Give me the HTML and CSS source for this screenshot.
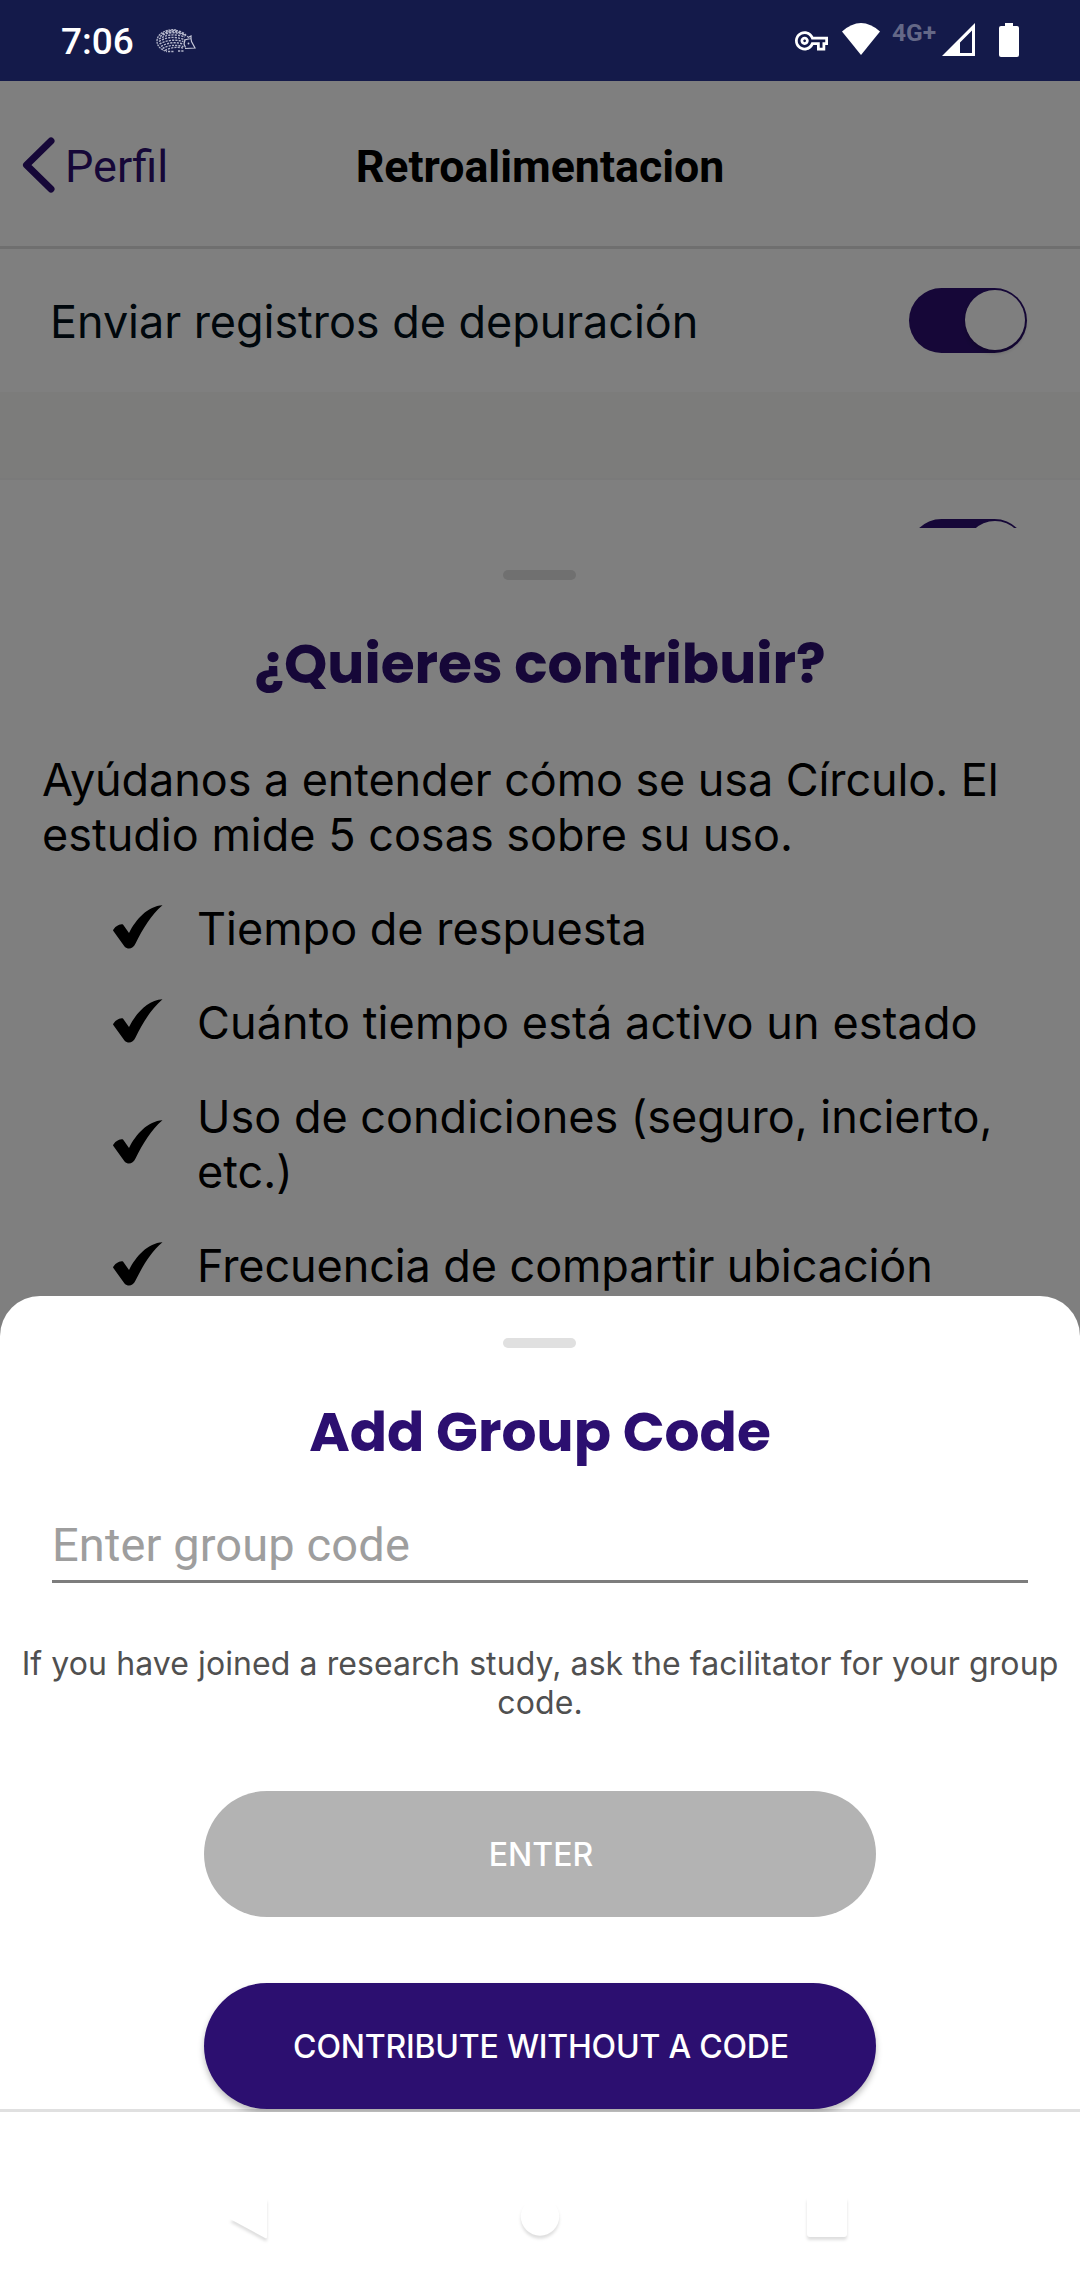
FILE: index.html
```html
<!DOCTYPE html>
<html lang="es">
<head>
<meta charset="utf-8">
<title>Retroalimentacion</title>
<link rel="stylesheet" href="styles.css">
</head>
<body>
<div class="phone">
  <div class="status">
    <span class="clock">7:06</span>
    <svg class="hedgehog" width="40" height="24" viewBox="0 0 40 24" fill="none">
      <path d="M20 1C10-.5 1 5 1 12c0 5 4 9 10 10.500" stroke="#b4b7cb" stroke-width="1.300" stroke-dasharray="2 .8"/>
      <path d="M10 2.500Q22-1 30 6M6 5Q20-1 32 8M4 7.500q11-7 26-1M3 10q11-7 26-2M3 12.500q11-7 25-2M3.500 15q11-6 24-2.500M5 17.500q10-6 22-2.500M6.500 19.500q9-5 21-2M9 21.500q8-4.500 18-2.500M12 22.500h6M22 22h6" stroke="#b4b7cb" stroke-width="1.400" stroke-dasharray="2.200 1.100"/>
      <path d="M28 11l7-1.500 .5 3 3.500 6.500-10 .5M29 11l-1 4 1.500 3.500M32 8.500l3-1.500v3" stroke="#c6c8d8" stroke-width="1.200"/>
      <circle cx="32.500" cy="14.500" r=".9" fill="#c6c8d8"/>
    </svg>
    <div class="tray">
      <svg class="key" width="33" height="19.500" viewBox="0 5 24 14"><path fill="#fff" d="M22 19h-6v-4h-2.680c-1.140 2.420-3.600 4-6.320 4-3.860 0-7-3.140-7-7s3.140-7 7-7c2.720 0 5.170 1.580 6.320 4H24v6h-2v4zm-4-2h2v-4h2v-2H11.940l-.23-.67C11.010 8.340 9.110 7 7 7c-2.760 0-5 2.240-5 5s2.240 5 5 5c2.110 0 4.010-1.340 4.710-3.330l.23-.67H18v4zM7 15c-1.650 0-3-1.350-3-3s1.350-3 3-3 3 1.350 3 3-1.350 3-3 3zm0-4c-.55 0-1 .45-1 1s.45 1 1 1 1-.45 1-1-.45-1-1-1z"/></svg>
      <svg class="wifi" width="40" height="34" viewBox="0 0 40 34"><path d="M1 9.500Q20-7.500 39 9.500L20 33z" fill="#fff"/></svg>
      <span class="net">4G+</span>
      <svg class="signal" width="33" height="33" viewBox="0 0 33 33"><path d="M33 0V33H0zM30 7.500L18 19.500V30h12z" fill="#fff" fill-rule="evenodd"/></svg>
      <svg class="battery" width="20" height="34" viewBox="0 0 20 34"><path d="M6 0h8v3h4a2 2 0 0 1 2 2v27a2 2 0 0 1-2 2H2a2 2 0 0 1-2-2V5a2 2 0 0 1 2-2h4z" fill="#fff"/></svg>
    </div>
  </div>

  <main class="screen">
    <header class="header">
      <a class="back">
        <svg width="34" height="58" viewBox="0 0 34 58"><path d="M30 5L5.500 29 30 53" fill="none" stroke="#2c0f70" stroke-width="7" stroke-linecap="round" stroke-linejoin="round"/></svg>
        <span>Perfil</span>
      </a>
      <h1 class="header-title">Retroalimentacion</h1>
    </header>
    <div class="row">
      <span class="row-label">Enviar registros de depuración</span>
      <span class="switch"><span class="knob"></span></span>
    </div>
    <div class="spacer"></div>
    <div class="row row-end"><span class="switch"><span class="knob"></span></span></div>

    <section class="sheet sheet-contribute">
      <div class="handle"></div>
      <h2 class="title">¿Quieres contribuir?</h2>
      <p class="intro"><span class="snug">Ayúdanos a entender cómo se usa Círculo. El</span><br>estudio mide 5 cosas sobre su uso.</p>
      <ul class="list">
        <li><svg class="check" viewBox="0 0 50 44"><use href="#check"/></svg><span>Tiempo de respuesta</span></li>
        <li><svg class="check" viewBox="0 0 50 44"><use href="#check"/></svg><span class="loose">Cuánto tiempo está activo un estado</span></li>
        <li><svg class="check" viewBox="0 0 50 44"><use href="#check"/></svg><span>Uso de condiciones (seguro, incierto,<br>etc.)</span></li>
        <li><svg class="check" viewBox="0 0 50 44"><use href="#check"/></svg><span class="snug">Frecuencia de compartir ubicación</span></li>
      </ul>
    </section>
    <div class="backdrop"></div>
  </main>

  <section class="sheet sheet-code">
    <div class="handle"></div>
    <h2 class="title">Add Group Code</h2>
    <div class="field">Enter group code</div>
    <p class="help">If you have joined a research study, ask the facilitator for your group<br>code.</p>
    <button class="btn btn-disabled">ENTER</button>
    <button class="btn btn-primary">CONTRIBUTE WITHOUT A CODE</button>
  </section>

  <nav class="navbar">
    <svg width="42" height="52" viewBox="0 0 42 52"><path d="M2 23L37 3q2-1 2 1V41q0 2-2 1z" fill="#fff"/></svg>
    <svg width="46" height="52" viewBox="0 0 46 52"><circle cx="26" cy="20.500" r="19.200" fill="#fff"/></svg>
    <svg width="46" height="52" viewBox="0 0 46 52"><rect x="3" y="1" width="40" height="40" rx="3" fill="#fff"/></svg>
  </nav>
</div>
<svg width="0" height="0" class="defs"><defs>
  <path id="check" d="M0 25.500C1.500 22 6.500 18.500 10 19.500L16 28C23 14 35 1 49.500 .2C38 10 30 23.500 22.500 38.500C20 44 15 45 11.500 41.500z"/>
</defs></svg>
</body>
</html>
```
FILE: styles.css
```css
* { box-sizing: border-box; margin: 0; padding: 0; }
body { background: #fff; font-family: Inter, "Liberation Sans", sans-serif; color: #000; }
svg { display: block; flex: none; }
.defs { position: absolute; }
.phone { position: relative; width: 1080px; height: 2280px; overflow: hidden; display: flex; flex-direction: column; }

.status { height: 81px; background: #141a4a; display: flex; align-items: flex-start; padding-left: 61px; }
.clock { font: 500 37px/44px Roboto, sans-serif; color: #fff; margin-top: 20px; width: 95px; }
.hedgehog { margin-top: 29px; }
.tray { margin-left: auto; display: flex; padding-right: 61px; }
.key { margin-top: 31px; }
.wifi { margin: 22px 0 0 13px; }
.net { font: 700 24.5px/28px Roboto, sans-serif; color: #646887; margin: 19px 0 0 11px; width: 50px; }
.signal { margin-top: 23px; }
.battery { margin: 23px 0 0 24px; }

.screen { position: relative; flex: 1; background: #fff; }
.header { height: 168px; border-bottom: 3px solid #dedede; display: grid; grid-template-columns: 1fr auto 1fr; align-items: center; padding: 0 21px; }
.back { display: flex; align-items: center; color: #2c0f70; font: 400 45px/54px Roboto, sans-serif; gap: 10px; padding-top: 3px; }
.back span { padding-top: 4px; }
.header-title { font: 700 44.700px/54px Roboto, sans-serif; padding-top: 6px; }

.row { height: 143px; display: flex; align-items: center; justify-content: space-between; padding: 0 53px 0 50px; }
.row-end { justify-content: flex-end; }
.row-label { font-size: 45px; line-height: 55px; letter-spacing: -.050px; color: #000f18; padding-top: 1px; }
.spacer { height: 88px; background: #f9f9f6; border-bottom: 2px solid #f5f5f5; }
.switch { width: 118px; height: 65px; border-radius: 33px; background: #2c0f70; padding: 2px; display: flex; justify-content: flex-end; }
.knob { width: 60px; height: 60px; border-radius: 50%; background: #fff; box-shadow: 0 3px 4px rgba(0, 0, 0, .2); }

.sheet { position: absolute; left: 0; right: 0; bottom: 0; background: #fff; display: flex; flex-direction: column; align-items: center; }
.sheet-contribute { top: 447px; padding-top: 42px; }
.handle { flex: none; width: 73px; height: 10px; margin-right: 1px; border-radius: 5px; background: #e0e0e0; }
.title { font-family: Poppins, Inter, sans-serif; font-weight: 700; font-size: 55px; line-height: 80px; margin-top: 44px; color: #2c0f70; }
.intro { align-self: stretch; font-size: 45px; line-height: 55px; padding-left: 42px; margin-top: 48px; }
.list { list-style: none; align-self: stretch; padding-left: 113px; margin-top: 39px; display: flex; flex-direction: column; gap: 39px; font-size: 45px; line-height: 55px; }
.list li { display: flex; align-items: center; gap: 34px; }
.check { width: 50px; height: 44px; margin-bottom: 4px; }
.snug { letter-spacing: -.090px; }
.loose { letter-spacing: .080px; }
.backdrop { position: absolute; inset: 0; background: rgba(0, 0, 0, .5); }

.sheet-code { top: 1296px; bottom: 168px; border-bottom: 3px solid #e0e0e0; padding-top: 42px; border-top-left-radius: 40px; border-top-right-radius: 40px; }
.field { width: 976px; height: 66px; margin-top: 45px; border-bottom: 3px solid #7d7d7d; font: 400 47px/56px Roboto, sans-serif; letter-spacing: .120px; color: #9e9e9e; }
.help { margin-top: 61px; font-size: 32px; line-height: 39px; letter-spacing: .087px; text-align: center; color: #505050; }
.btn { flex: none; width: 672px; height: 126px; border: 0; border-radius: 63px; color: #fff; font: 500 32px/40px Inter, sans-serif; padding: 1px 0 0 2px; }
.btn-disabled { margin-top: 69px; background: #b3b3b3; }
.btn-primary { margin-top: 66px; background: #2c0f70; letter-spacing: -.200px; box-shadow: 0 4px 6px rgba(0, 0, 0, .26); }

.navbar { position: absolute; left: 0; right: 0; bottom: 0; height: 168px; background: #fff; display: grid; grid-template-columns: 42px 46px 46px; justify-content: space-between; padding: 84px 230px 0 228px; }
.navbar svg { filter: drop-shadow(0 3px 1.500px rgba(0, 0, 0, .13)); }
```
